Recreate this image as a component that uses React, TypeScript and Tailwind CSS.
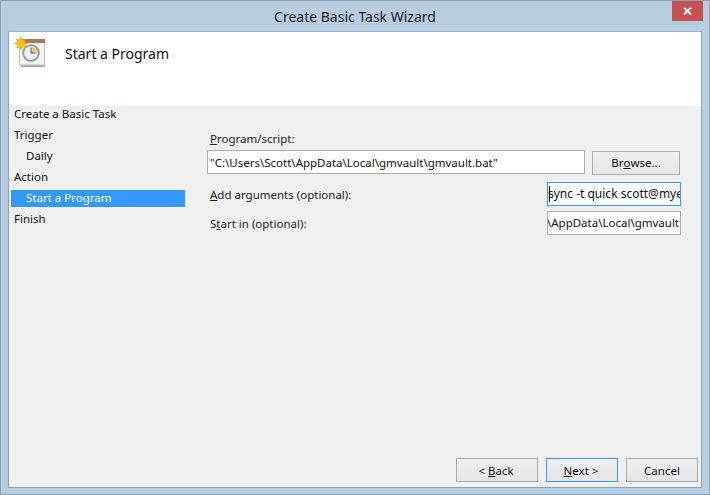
import React from "react";

const font = "font-['Noto_Sans','Open_Sans',sans-serif]";

function TaskIcon() {
  return (
    <svg width="32" height="32" viewBox="0 0 32 32" className="block">
      <rect x="7" y="8" width="24" height="22" fill="#a9a69f" />
      <rect x="5.5" y="3.5" width="25" height="24.5" fill="#f7f5ef" stroke="#c4c0b6" />
      <rect x="6" y="2" width="25" height="4" fill="#a9775c" />
      <circle cx="17" cy="16" r="7.8" fill="#eef0f2" stroke="#8d949c" strokeWidth="1.8" />
      <path d="M17 10 A6 6 0 0 1 23 16 L17 16 Z" fill="#e6c68c" />
      <path d="M17 10.5V16H21.5" fill="none" stroke="#59616b" strokeWidth="1" />
      <g stroke="#f2a30f" strokeWidth="1.4">
        <path d="M7 0V13M0.5 6.5H13.5M2.5 2L11.5 11M11.5 2L2.5 11" />
      </g>
      <circle cx="7" cy="6.5" r="4.2" fill="#fbbf24" stroke="#f59e0b" strokeWidth="0.6" />
    </svg>
  );
}

function StepItem({ label, active, sub }: { label: string; active?: boolean; sub?: boolean }) {
  return (
    <div
      className={`h-[17px] pb-[2px] flex items-center whitespace-nowrap mb-1 ${sub ? "pl-[15px]" : "pl-[3px]"} ${
        active ? "bg-[#3399ff] text-white" : "text-[#111]"
      }`}
    >
      {label}
    </div>
  );
}

function WinButton({ children, focused, className }: { children: React.ReactNode; focused?: boolean; className: string }) {
  return (
    <button
      className={`h-[24px] border flex items-center justify-center bg-gradient-to-b from-[#f0f0f0] to-[#e5e5e5] text-[#111] text-[11.5px] ${
        focused ? "border-[#3d96f2]" : "border-[#acacac]"
      } ${className}`}
    >
      {children}
    </button>
  );
}

function TextBox({ children, focused, className }: { children: React.ReactNode; focused?: boolean; className: string }) {
  return (
    <div
      className={`h-[24px] bg-white border flex items-center overflow-hidden whitespace-nowrap text-[#111] ${
        focused ? "border-[#3d96f2]" : "border-[#acacac]"
      } ${className}`}
    >
      {children}
    </div>
  );
}

export default function App() {
  return (
    <div className={`${font} w-[710px] h-[495px] bg-[#b7cde2] border border-[#8fa1b8] flex flex-col text-[11.5px] overflow-hidden`}>
      {/* title bar */}
      <div className="h-[30px] shrink-0 flex items-start">
        <div className="w-[670px] h-[30px] flex items-center justify-center text-[14px] text-[#1a1a1a] translate-x-[19px]">
          Create Basic Task Wizard
        </div>
        <div className="w-[31px] h-[20px] ml-auto mr-[6px] bg-[#c75050] flex items-center justify-center">
          <svg width="9" height="8" viewBox="0 0 9 8">
            <path d="M1 0.5L8 7.5M8 0.5L1 7.5" stroke="#fff" strokeWidth="2" fill="none" />
          </svg>
        </div>
      </div>

      {/* client area */}
      <div className="mx-[7px] mb-[6px] flex-1 flex flex-col border border-[#8fa1b8] border-t-[#9fb1c6]">
        <div className="h-[74px] shrink-0 bg-white flex items-start">
          <div className="ml-[5px] mt-[5px]">
            <TaskIcon />
          </div>
          <div className="ml-[19px] mt-[9px] text-[14px] leading-[26px] text-[#111]">Start a Program</div>
        </div>

        <div className="flex-1 bg-[#f0f0f0] flex flex-col">
          <div className="flex-1 flex">
            <div className="w-[174px] ml-[2px] shrink-0">
              <StepItem label="Create a Basic Task" />
              <StepItem label="Trigger" />
              <StepItem label="Daily" sub />
              <StepItem label="Action" />
              <StepItem label="Start a Program" sub active />
              <StepItem label="Finish" />
            </div>

            <div className="ml-[22px] w-[474px] pt-[24px] flex flex-col text-[#222]">
              <div className="h-[17px] ml-[3px] leading-[17px]">
                <span className="underline">P</span>rogram/script:
              </div>
              <div className="mt-[3px] flex items-start">
                <TextBox className="w-[378px] pl-[2px] pt-[1px]">"C:\Users\Scott\AppData\Local\gmvault\gmvault.bat"</TextBox>
                <WinButton className="w-[88px] ml-[7px] mt-[1px]">
                  Br<span className="underline">o</span>wse...
                </WinButton>
              </div>
              <div className="mt-[7px] flex items-center justify-between">
                <div className="ml-[3px] pt-[1px]">
                  <span className="underline">A</span>dd arguments (optional):
                </div>
                <TextBox focused className="w-[134px] pl-[1px] relative text-[12px]">
                  <span className="absolute left-[1px] top-[3px] h-[16px] w-px bg-black" />
                  <span className="-ml-[1px]">sync -t quick scott@myemail.com</span>
                </TextBox>
              </div>
              <div className="mt-[5px] flex items-center justify-between">
                <div className="ml-[3px] pt-[1px]">
                  S<span className="underline">t</span>art in (optional):
                </div>
                <TextBox className="w-[134px] justify-end pr-[1px]">C:\Users\Scott\AppData\Local\gmvault</TextBox>
              </div>
            </div>
          </div>

          {/* buttons */}
          <div className="h-[29px] shrink-0 flex items-start">
            <WinButton className="w-[82px] ml-[447px] pt-[1px] pr-[2px]">
              &lt;&nbsp;<span className="underline">B</span>ack
            </WinButton>
            <WinButton focused className="w-[72px] ml-[8px] pt-[1px] pr-[2px]">
              <span className="underline">N</span>ext &gt;
            </WinButton>
            <WinButton className="w-[72px] ml-[8px] pt-[1px]">Cancel</WinButton>
          </div>
        </div>
      </div>
    </div>
  );
}
